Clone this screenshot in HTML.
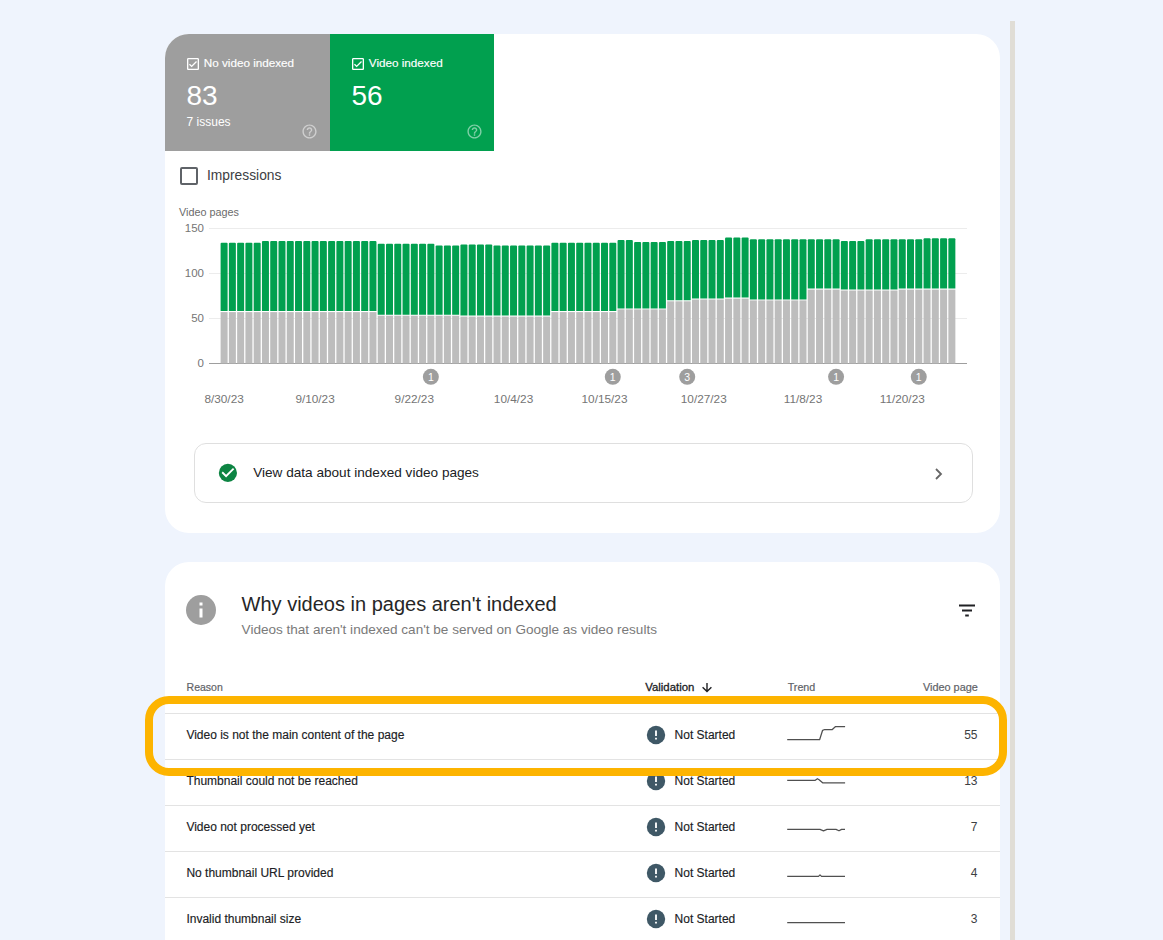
<!DOCTYPE html>
<html><head><meta charset="utf-8"><style>
*{box-sizing:border-box}
html,body{margin:0;padding:0}
body{width:1163px;height:940px;overflow:hidden;position:relative;background:#eff4fd;font-family:"Liberation Sans",sans-serif;color:#202124}
.abs{position:absolute}
.card{position:absolute;left:165px;width:835px;background:#fff;border-radius:24px;overflow:hidden}
.tab{position:absolute;top:0;height:117px;color:#fff}
.tabl{position:absolute;left:38.8px;top:22px;font-size:11.7px;line-height:14px;white-space:nowrap;-webkit-text-stroke:0.15px #fff}
.cb{position:absolute;left:19.5px;top:22px;width:16px;height:16px}
.big{position:absolute;left:21.5px;top:46px;font-size:28px;line-height:32px}
.iss{position:absolute;left:21.6px;top:81px;font-size:12px;line-height:14px}
.help{position:absolute;left:136.4px;top:89.4px;width:17px;height:17px}
.txt{position:absolute;white-space:nowrap;line-height:1}
.row{position:absolute;left:165px;width:835px;height:1px;background:#e3e3e3}
.rt{position:absolute;white-space:nowrap;font-size:12px;line-height:0;height:0;-webkit-text-stroke:0.15px #202124;color:#202124}
.num{right:185.5px;text-align:right;-webkit-text-stroke:0;color:#3c4043}
.exc{position:absolute;width:18px;height:18px;border-radius:50%;background:#3c4f5c;color:#fff;font-size:13px;font-weight:bold;text-align:center;line-height:18px}
.hd{position:absolute;white-space:nowrap;font-size:11px;line-height:0;color:#5f6368;-webkit-text-stroke:0.2px #5f6368}
</style></head><body>
<div class="abs" style="left:1010px;top:21px;width:5px;height:930px;background:#e0ddd6"></div>

<div class="card" style="top:34px;height:499px">
  <div class="tab" style="left:0;width:165px;background:#9e9e9e">
    <svg class="cb" viewBox="0 0 24 24"><path fill="#fff" d="M19 3H5c-1.11 0-2 .9-2 2v14c0 1.1.89 2 2 2h14c1.11 0 2-.9 2-2V5c0-1.1-.89-2-2-2zm0 16H5V5h14v14zM17.99 9l-1.41-1.42-6.59 6.59-2.58-2.57-1.42 1.41 4 3.99z"/></svg>
    <div class="tabl">No video indexed</div>
    <div class="big">83</div>
    <div class="iss">7 issues</div>
    <svg class="help" viewBox="0 0 24 24"><path fill="rgba(255,255,255,0.5)" d="M11 18h2v-2h-2v2zm1-16C6.48 2 2 6.48 2 12s4.48 10 10 10 10-4.48 10-10S17.52 2 12 2zm0 18c-4.41 0-8-3.59-8-8s3.590-8 8-8 8 3.59 8 8-3.59 8-8 8zm0-14c-2.21 0-4 1.79-4 4h2c0-1.1.9-2 2-2s2 .9 2 2c0 2-3 1.75-3 5h2c0-2.250 3-2.5 3-5 0-2.21-1.79-4-4-4z"/></svg>
  </div>
  <div class="tab" style="left:165px;width:164px;background:#01a04f">
    <svg class="cb" viewBox="0 0 24 24"><path fill="#fff" d="M19 3H5c-1.11 0-2 .9-2 2v14c0 1.1.89 2 2 2h14c1.11 0 2-.9 2-2V5c0-1.1-.89-2-2-2zm0 16H5V5h14v14zM17.99 9l-1.41-1.42-6.59 6.59-2.58-2.57-1.42 1.41 4 3.99z"/></svg>
    <div class="tabl">Video indexed</div>
    <div class="big">56</div>
    <svg class="help" viewBox="0 0 24 24"><path fill="rgba(255,255,255,0.5)" d="M11 18h2v-2h-2v2zm1-16C6.48 2 2 6.48 2 12s4.48 10 10 10 10-4.48 10-10S17.52 2 12 2zm0 18c-4.41 0-8-3.59-8-8s3.590-8 8-8 8 3.59 8 8-3.59 8-8 8zm0-14c-2.21 0-4 1.79-4 4h2c0-1.1.9-2 2-2s2 .9 2 2c0 2-3 1.75-3 5h2c0-2.250 3-2.5 3-5 0-2.21-1.79-4-4-4z"/></svg>
  </div>
  <div class="abs" style="left:15px;top:132.5px;width:18px;height:18px;border:2px solid #5f6368;border-radius:2px"></div>
  <div class="txt" style="left:42px;top:135px;font-size:13.8px;color:#3c4043">Impressions</div>
  <div class="abs" style="left:29px;top:409px;width:779px;height:60px;border:1px solid #dfdfdf;border-radius:12px"></div>
  <svg class="abs" style="left:51.6px;top:428px" width="21.8" height="21.8" viewBox="0 0 24 24"><circle cx="12" cy="12" r="10" fill="#0d8443"/><path fill="#fff" d="M10 17l-5-5 1.41-1.41L10 14.17l7.59-7.59L19 8l-9 9z"/></svg>
  <div class="txt" style="left:88.2px;top:431.8px;font-size:13.6px;color:#202124">View data about indexed video pages</div>
  <svg class="abs" style="left:768px;top:432.5px" width="10" height="14" viewBox="0 0 10 14"><path d="M3 2L8 7L3 12" fill="none" stroke="#666" stroke-width="1.8"/></svg>
</div>

<svg class="abs" style="left:0;top:0" width="1163" height="940" viewBox="0 0 1163 940" font-family="Liberation Sans, sans-serif">
  <g stroke="#ececec" stroke-width="1"><path d="M209 228.5H967M209 273.5H967M209 318.5H967"/></g>
  <path d="M209 363.5H967" stroke="#9e9e9e" stroke-width="1"/>
  <text x="179" y="216.3" fill="#6b6b6b" font-size="10.8">Video pages</text>
  <g fill="#757575" font-size="11.5" text-anchor="end"><text x="204" y="232">150</text><text x="204" y="277">100</text><text x="204" y="322">50</text><text x="204" y="367">0</text></g>
  <path d="M220.60 363.4V312.10h7.0V363.4z" fill="#bdbdbd"/>
<path d="M220.60 311.10V243.80q0 -1 1 -1h5.0q1 0 1 1V311.10z" fill="#01a04f"/>
<path d="M228.87 363.4V312.10h7.0V363.4z" fill="#bdbdbd"/>
<path d="M228.87 311.10V243.80q0 -1 1 -1h5.0q1 0 1 1V311.10z" fill="#01a04f"/>
<path d="M237.14 363.4V312.10h7.0V363.4z" fill="#bdbdbd"/>
<path d="M237.14 311.10V243.80q0 -1 1 -1h5.0q1 0 1 1V311.10z" fill="#01a04f"/>
<path d="M245.41 363.4V312.10h7.0V363.4z" fill="#bdbdbd"/>
<path d="M245.41 311.10V243.80q0 -1 1 -1h5.0q1 0 1 1V311.10z" fill="#01a04f"/>
<path d="M253.68 363.4V312.10h7.0V363.4z" fill="#bdbdbd"/>
<path d="M253.68 311.10V243.80q0 -1 1 -1h5.0q1 0 1 1V311.10z" fill="#01a04f"/>
<path d="M261.95 363.4V312.10h7.0V363.4z" fill="#bdbdbd"/>
<path d="M261.95 311.10V242.00q0 -1 1 -1h5.0q1 0 1 1V311.10z" fill="#01a04f"/>
<path d="M270.22 363.4V312.10h7.0V363.4z" fill="#bdbdbd"/>
<path d="M270.22 311.10V242.00q0 -1 1 -1h5.0q1 0 1 1V311.10z" fill="#01a04f"/>
<path d="M278.49 363.4V312.10h7.0V363.4z" fill="#bdbdbd"/>
<path d="M278.49 311.10V242.00q0 -1 1 -1h5.0q1 0 1 1V311.10z" fill="#01a04f"/>
<path d="M286.76 363.4V312.10h7.0V363.4z" fill="#bdbdbd"/>
<path d="M286.76 311.10V242.00q0 -1 1 -1h5.0q1 0 1 1V311.10z" fill="#01a04f"/>
<path d="M295.03 363.4V312.10h7.0V363.4z" fill="#bdbdbd"/>
<path d="M295.03 311.10V242.00q0 -1 1 -1h5.0q1 0 1 1V311.10z" fill="#01a04f"/>
<path d="M303.30 363.4V312.10h7.0V363.4z" fill="#bdbdbd"/>
<path d="M303.30 311.10V242.00q0 -1 1 -1h5.0q1 0 1 1V311.10z" fill="#01a04f"/>
<path d="M311.57 363.4V312.10h7.0V363.4z" fill="#bdbdbd"/>
<path d="M311.57 311.10V242.00q0 -1 1 -1h5.0q1 0 1 1V311.10z" fill="#01a04f"/>
<path d="M319.84 363.4V312.10h7.0V363.4z" fill="#bdbdbd"/>
<path d="M319.84 311.10V242.00q0 -1 1 -1h5.0q1 0 1 1V311.10z" fill="#01a04f"/>
<path d="M328.11 363.4V312.10h7.0V363.4z" fill="#bdbdbd"/>
<path d="M328.11 311.10V242.00q0 -1 1 -1h5.0q1 0 1 1V311.10z" fill="#01a04f"/>
<path d="M336.38 363.4V312.10h7.0V363.4z" fill="#bdbdbd"/>
<path d="M336.38 311.10V242.00q0 -1 1 -1h5.0q1 0 1 1V311.10z" fill="#01a04f"/>
<path d="M344.65 363.4V312.10h7.0V363.4z" fill="#bdbdbd"/>
<path d="M344.65 311.10V242.00q0 -1 1 -1h5.0q1 0 1 1V311.10z" fill="#01a04f"/>
<path d="M352.92 363.4V312.10h7.0V363.4z" fill="#bdbdbd"/>
<path d="M352.92 311.10V242.00q0 -1 1 -1h5.0q1 0 1 1V311.10z" fill="#01a04f"/>
<path d="M361.19 363.4V312.10h7.0V363.4z" fill="#bdbdbd"/>
<path d="M361.19 311.10V242.00q0 -1 1 -1h5.0q1 0 1 1V311.10z" fill="#01a04f"/>
<path d="M369.46 363.4V312.10h7.0V363.4z" fill="#bdbdbd"/>
<path d="M369.46 311.10V242.00q0 -1 1 -1h5.0q1 0 1 1V311.10z" fill="#01a04f"/>
<path d="M377.73 363.4V315.70h7.0V363.4z" fill="#bdbdbd"/>
<path d="M377.73 314.70V244.70q0 -1 1 -1h5.0q1 0 1 1V314.70z" fill="#01a04f"/>
<path d="M386.00 363.4V315.70h7.0V363.4z" fill="#bdbdbd"/>
<path d="M386.00 314.70V244.70q0 -1 1 -1h5.0q1 0 1 1V314.70z" fill="#01a04f"/>
<path d="M394.27 363.4V315.70h7.0V363.4z" fill="#bdbdbd"/>
<path d="M394.27 314.70V244.70q0 -1 1 -1h5.0q1 0 1 1V314.70z" fill="#01a04f"/>
<path d="M402.54 363.4V315.70h7.0V363.4z" fill="#bdbdbd"/>
<path d="M402.54 314.70V244.70q0 -1 1 -1h5.0q1 0 1 1V314.70z" fill="#01a04f"/>
<path d="M410.81 363.4V315.70h7.0V363.4z" fill="#bdbdbd"/>
<path d="M410.81 314.70V244.70q0 -1 1 -1h5.0q1 0 1 1V314.70z" fill="#01a04f"/>
<path d="M419.08 363.4V315.70h7.0V363.4z" fill="#bdbdbd"/>
<path d="M419.08 314.70V244.70q0 -1 1 -1h5.0q1 0 1 1V314.70z" fill="#01a04f"/>
<path d="M427.35 363.4V315.70h7.0V363.4z" fill="#bdbdbd"/>
<path d="M427.35 314.70V244.70q0 -1 1 -1h5.0q1 0 1 1V314.70z" fill="#01a04f"/>
<path d="M435.62 363.4V315.70h7.0V363.4z" fill="#bdbdbd"/>
<path d="M435.62 314.70V246.50q0 -1 1 -1h5.0q1 0 1 1V314.70z" fill="#01a04f"/>
<path d="M443.89 363.4V315.70h7.0V363.4z" fill="#bdbdbd"/>
<path d="M443.89 314.70V246.50q0 -1 1 -1h5.0q1 0 1 1V314.70z" fill="#01a04f"/>
<path d="M452.16 363.4V315.70h7.0V363.4z" fill="#bdbdbd"/>
<path d="M452.16 314.70V246.50q0 -1 1 -1h5.0q1 0 1 1V314.70z" fill="#01a04f"/>
<path d="M460.43 363.4V316.60h7.0V363.4z" fill="#bdbdbd"/>
<path d="M460.43 315.60V245.60q0 -1 1 -1h5.0q1 0 1 1V315.60z" fill="#01a04f"/>
<path d="M468.70 363.4V316.60h7.0V363.4z" fill="#bdbdbd"/>
<path d="M468.70 315.60V245.60q0 -1 1 -1h5.0q1 0 1 1V315.60z" fill="#01a04f"/>
<path d="M476.97 363.4V316.60h7.0V363.4z" fill="#bdbdbd"/>
<path d="M476.97 315.60V245.60q0 -1 1 -1h5.0q1 0 1 1V315.60z" fill="#01a04f"/>
<path d="M485.24 363.4V316.60h7.0V363.4z" fill="#bdbdbd"/>
<path d="M485.24 315.60V245.60q0 -1 1 -1h5.0q1 0 1 1V315.60z" fill="#01a04f"/>
<path d="M493.51 363.4V316.60h7.0V363.4z" fill="#bdbdbd"/>
<path d="M493.51 315.60V246.50q0 -1 1 -1h5.0q1 0 1 1V315.60z" fill="#01a04f"/>
<path d="M501.78 363.4V316.60h7.0V363.4z" fill="#bdbdbd"/>
<path d="M501.78 315.60V246.50q0 -1 1 -1h5.0q1 0 1 1V315.60z" fill="#01a04f"/>
<path d="M510.05 363.4V316.60h7.0V363.4z" fill="#bdbdbd"/>
<path d="M510.05 315.60V246.50q0 -1 1 -1h5.0q1 0 1 1V315.60z" fill="#01a04f"/>
<path d="M518.32 363.4V316.60h7.0V363.4z" fill="#bdbdbd"/>
<path d="M518.32 315.60V246.50q0 -1 1 -1h5.0q1 0 1 1V315.60z" fill="#01a04f"/>
<path d="M526.59 363.4V316.60h7.0V363.4z" fill="#bdbdbd"/>
<path d="M526.59 315.60V246.50q0 -1 1 -1h5.0q1 0 1 1V315.60z" fill="#01a04f"/>
<path d="M534.86 363.4V316.60h7.0V363.4z" fill="#bdbdbd"/>
<path d="M534.86 315.60V246.50q0 -1 1 -1h5.0q1 0 1 1V315.60z" fill="#01a04f"/>
<path d="M543.13 363.4V316.60h7.0V363.4z" fill="#bdbdbd"/>
<path d="M543.13 315.60V246.50q0 -1 1 -1h5.0q1 0 1 1V315.60z" fill="#01a04f"/>
<path d="M551.40 363.4V312.10h7.0V363.4z" fill="#bdbdbd"/>
<path d="M551.40 311.10V243.80q0 -1 1 -1h5.0q1 0 1 1V311.10z" fill="#01a04f"/>
<path d="M559.67 363.4V312.10h7.0V363.4z" fill="#bdbdbd"/>
<path d="M559.67 311.10V243.80q0 -1 1 -1h5.0q1 0 1 1V311.10z" fill="#01a04f"/>
<path d="M567.94 363.4V312.10h7.0V363.4z" fill="#bdbdbd"/>
<path d="M567.94 311.10V243.80q0 -1 1 -1h5.0q1 0 1 1V311.10z" fill="#01a04f"/>
<path d="M576.21 363.4V312.10h7.0V363.4z" fill="#bdbdbd"/>
<path d="M576.21 311.10V243.80q0 -1 1 -1h5.0q1 0 1 1V311.10z" fill="#01a04f"/>
<path d="M584.48 363.4V312.10h7.0V363.4z" fill="#bdbdbd"/>
<path d="M584.48 311.10V243.80q0 -1 1 -1h5.0q1 0 1 1V311.10z" fill="#01a04f"/>
<path d="M592.75 363.4V312.10h7.0V363.4z" fill="#bdbdbd"/>
<path d="M592.75 311.10V243.80q0 -1 1 -1h5.0q1 0 1 1V311.10z" fill="#01a04f"/>
<path d="M601.02 363.4V312.10h7.0V363.4z" fill="#bdbdbd"/>
<path d="M601.02 311.10V243.80q0 -1 1 -1h5.0q1 0 1 1V311.10z" fill="#01a04f"/>
<path d="M609.29 363.4V312.10h7.0V363.4z" fill="#bdbdbd"/>
<path d="M609.29 311.10V243.80q0 -1 1 -1h5.0q1 0 1 1V311.10z" fill="#01a04f"/>
<path d="M617.56 363.4V309.40h7.0V363.4z" fill="#bdbdbd"/>
<path d="M617.56 308.40V241.10q0 -1 1 -1h5.0q1 0 1 1V308.40z" fill="#01a04f"/>
<path d="M625.83 363.4V309.40h7.0V363.4z" fill="#bdbdbd"/>
<path d="M625.83 308.40V241.10q0 -1 1 -1h5.0q1 0 1 1V308.40z" fill="#01a04f"/>
<path d="M634.10 363.4V309.40h7.0V363.4z" fill="#bdbdbd"/>
<path d="M634.10 308.40V242.90q0 -1 1 -1h5.0q1 0 1 1V308.40z" fill="#01a04f"/>
<path d="M642.37 363.4V309.40h7.0V363.4z" fill="#bdbdbd"/>
<path d="M642.37 308.40V242.90q0 -1 1 -1h5.0q1 0 1 1V308.40z" fill="#01a04f"/>
<path d="M650.64 363.4V309.40h7.0V363.4z" fill="#bdbdbd"/>
<path d="M650.64 308.40V242.90q0 -1 1 -1h5.0q1 0 1 1V308.40z" fill="#01a04f"/>
<path d="M658.91 363.4V309.40h7.0V363.4z" fill="#bdbdbd"/>
<path d="M658.91 308.40V242.90q0 -1 1 -1h5.0q1 0 1 1V308.40z" fill="#01a04f"/>
<path d="M667.18 363.4V301.30h7.0V363.4z" fill="#bdbdbd"/>
<path d="M667.18 300.30V242.00q0 -1 1 -1h5.0q1 0 1 1V300.30z" fill="#01a04f"/>
<path d="M675.45 363.4V301.30h7.0V363.4z" fill="#bdbdbd"/>
<path d="M675.45 300.30V242.00q0 -1 1 -1h5.0q1 0 1 1V300.30z" fill="#01a04f"/>
<path d="M683.72 363.4V301.30h7.0V363.4z" fill="#bdbdbd"/>
<path d="M683.72 300.30V242.00q0 -1 1 -1h5.0q1 0 1 1V300.30z" fill="#01a04f"/>
<path d="M691.99 363.4V299.50h7.0V363.4z" fill="#bdbdbd"/>
<path d="M691.99 298.50V241.10q0 -1 1 -1h5.0q1 0 1 1V298.50z" fill="#01a04f"/>
<path d="M700.26 363.4V299.50h7.0V363.4z" fill="#bdbdbd"/>
<path d="M700.26 298.50V241.10q0 -1 1 -1h5.0q1 0 1 1V298.50z" fill="#01a04f"/>
<path d="M708.53 363.4V299.50h7.0V363.4z" fill="#bdbdbd"/>
<path d="M708.53 298.50V241.10q0 -1 1 -1h5.0q1 0 1 1V298.50z" fill="#01a04f"/>
<path d="M716.80 363.4V299.50h7.0V363.4z" fill="#bdbdbd"/>
<path d="M716.80 298.50V241.10q0 -1 1 -1h5.0q1 0 1 1V298.50z" fill="#01a04f"/>
<path d="M725.07 363.4V298.60h7.0V363.4z" fill="#bdbdbd"/>
<path d="M725.07 297.60V238.40q0 -1 1 -1h5.0q1 0 1 1V297.60z" fill="#01a04f"/>
<path d="M733.34 363.4V298.60h7.0V363.4z" fill="#bdbdbd"/>
<path d="M733.34 297.60V238.40q0 -1 1 -1h5.0q1 0 1 1V297.60z" fill="#01a04f"/>
<path d="M741.61 363.4V298.60h7.0V363.4z" fill="#bdbdbd"/>
<path d="M741.61 297.60V238.40q0 -1 1 -1h5.0q1 0 1 1V297.60z" fill="#01a04f"/>
<path d="M749.88 363.4V300.40h7.0V363.4z" fill="#bdbdbd"/>
<path d="M749.88 299.40V240.20q0 -1 1 -1h5.0q1 0 1 1V299.40z" fill="#01a04f"/>
<path d="M758.15 363.4V300.40h7.0V363.4z" fill="#bdbdbd"/>
<path d="M758.15 299.40V240.20q0 -1 1 -1h5.0q1 0 1 1V299.40z" fill="#01a04f"/>
<path d="M766.42 363.4V300.40h7.0V363.4z" fill="#bdbdbd"/>
<path d="M766.42 299.40V240.20q0 -1 1 -1h5.0q1 0 1 1V299.40z" fill="#01a04f"/>
<path d="M774.69 363.4V300.40h7.0V363.4z" fill="#bdbdbd"/>
<path d="M774.69 299.40V240.20q0 -1 1 -1h5.0q1 0 1 1V299.40z" fill="#01a04f"/>
<path d="M782.96 363.4V300.40h7.0V363.4z" fill="#bdbdbd"/>
<path d="M782.96 299.40V240.20q0 -1 1 -1h5.0q1 0 1 1V299.40z" fill="#01a04f"/>
<path d="M791.23 363.4V300.40h7.0V363.4z" fill="#bdbdbd"/>
<path d="M791.23 299.40V240.20q0 -1 1 -1h5.0q1 0 1 1V299.40z" fill="#01a04f"/>
<path d="M799.50 363.4V300.40h7.0V363.4z" fill="#bdbdbd"/>
<path d="M799.50 299.40V240.20q0 -1 1 -1h5.0q1 0 1 1V299.40z" fill="#01a04f"/>
<path d="M807.77 363.4V289.60h7.0V363.4z" fill="#bdbdbd"/>
<path d="M807.77 288.60V240.20q0 -1 1 -1h5.0q1 0 1 1V288.60z" fill="#01a04f"/>
<path d="M816.04 363.4V289.60h7.0V363.4z" fill="#bdbdbd"/>
<path d="M816.04 288.60V240.20q0 -1 1 -1h5.0q1 0 1 1V288.60z" fill="#01a04f"/>
<path d="M824.31 363.4V289.60h7.0V363.4z" fill="#bdbdbd"/>
<path d="M824.31 288.60V240.20q0 -1 1 -1h5.0q1 0 1 1V288.60z" fill="#01a04f"/>
<path d="M832.58 363.4V289.60h7.0V363.4z" fill="#bdbdbd"/>
<path d="M832.58 288.60V240.20q0 -1 1 -1h5.0q1 0 1 1V288.60z" fill="#01a04f"/>
<path d="M840.85 363.4V290.50h7.0V363.4z" fill="#bdbdbd"/>
<path d="M840.85 289.50V242.00q0 -1 1 -1h5.0q1 0 1 1V289.50z" fill="#01a04f"/>
<path d="M849.12 363.4V290.50h7.0V363.4z" fill="#bdbdbd"/>
<path d="M849.12 289.50V242.00q0 -1 1 -1h5.0q1 0 1 1V289.50z" fill="#01a04f"/>
<path d="M857.39 363.4V290.50h7.0V363.4z" fill="#bdbdbd"/>
<path d="M857.39 289.50V242.00q0 -1 1 -1h5.0q1 0 1 1V289.50z" fill="#01a04f"/>
<path d="M865.66 363.4V290.50h7.0V363.4z" fill="#bdbdbd"/>
<path d="M865.66 289.50V240.20q0 -1 1 -1h5.0q1 0 1 1V289.50z" fill="#01a04f"/>
<path d="M873.93 363.4V290.50h7.0V363.4z" fill="#bdbdbd"/>
<path d="M873.93 289.50V240.20q0 -1 1 -1h5.0q1 0 1 1V289.50z" fill="#01a04f"/>
<path d="M882.20 363.4V290.50h7.0V363.4z" fill="#bdbdbd"/>
<path d="M882.20 289.50V240.20q0 -1 1 -1h5.0q1 0 1 1V289.50z" fill="#01a04f"/>
<path d="M890.47 363.4V290.50h7.0V363.4z" fill="#bdbdbd"/>
<path d="M890.47 289.50V240.20q0 -1 1 -1h5.0q1 0 1 1V289.50z" fill="#01a04f"/>
<path d="M898.74 363.4V289.60h7.0V363.4z" fill="#bdbdbd"/>
<path d="M898.74 288.60V240.20q0 -1 1 -1h5.0q1 0 1 1V288.60z" fill="#01a04f"/>
<path d="M907.01 363.4V289.60h7.0V363.4z" fill="#bdbdbd"/>
<path d="M907.01 288.60V240.20q0 -1 1 -1h5.0q1 0 1 1V288.60z" fill="#01a04f"/>
<path d="M915.28 363.4V289.60h7.0V363.4z" fill="#bdbdbd"/>
<path d="M915.28 288.60V240.20q0 -1 1 -1h5.0q1 0 1 1V288.60z" fill="#01a04f"/>
<path d="M923.55 363.4V289.60h7.0V363.4z" fill="#bdbdbd"/>
<path d="M923.55 288.60V239.30q0 -1 1 -1h5.0q1 0 1 1V288.60z" fill="#01a04f"/>
<path d="M931.82 363.4V289.60h7.0V363.4z" fill="#bdbdbd"/>
<path d="M931.82 288.60V239.30q0 -1 1 -1h5.0q1 0 1 1V288.60z" fill="#01a04f"/>
<path d="M940.09 363.4V289.60h7.0V363.4z" fill="#bdbdbd"/>
<path d="M940.09 288.60V239.30q0 -1 1 -1h5.0q1 0 1 1V288.60z" fill="#01a04f"/>
<path d="M948.36 363.4V289.60h7.0V363.4z" fill="#bdbdbd"/>
<path d="M948.36 288.60V239.30q0 -1 1 -1h5.0q1 0 1 1V288.60z" fill="#01a04f"/>
  <circle cx="430.85" cy="376.8" r="8" fill="#9e9e9e"/><text x="430.85" y="380.6" fill="#fff" font-size="10.5" text-anchor="middle">1</text><circle cx="612.79" cy="376.8" r="8" fill="#9e9e9e"/><text x="612.79" y="380.6" fill="#fff" font-size="10.5" text-anchor="middle">1</text><circle cx="687.22" cy="376.8" r="8" fill="#9e9e9e"/><text x="687.22" y="380.6" fill="#fff" font-size="10.5" text-anchor="middle">3</text><circle cx="836.08" cy="376.8" r="8" fill="#9e9e9e"/><text x="836.08" y="380.6" fill="#fff" font-size="10.5" text-anchor="middle">1</text><circle cx="918.78" cy="376.8" r="8" fill="#9e9e9e"/><text x="918.78" y="380.6" fill="#fff" font-size="10.5" text-anchor="middle">1</text>
  <text x="224.10" y="402.8" fill="#757575" font-size="11.8" text-anchor="middle">8/30/23</text><text x="315.07" y="402.8" fill="#757575" font-size="11.8" text-anchor="middle">9/10/23</text><text x="414.31" y="402.8" fill="#757575" font-size="11.8" text-anchor="middle">9/22/23</text><text x="513.55" y="402.8" fill="#757575" font-size="11.8" text-anchor="middle">10/4/23</text><text x="604.52" y="402.8" fill="#757575" font-size="11.8" text-anchor="middle">10/15/23</text><text x="703.76" y="402.8" fill="#757575" font-size="11.8" text-anchor="middle">10/27/23</text><text x="803.00" y="402.8" fill="#757575" font-size="11.8" text-anchor="middle">11/8/23</text><text x="902.24" y="402.8" fill="#757575" font-size="11.8" text-anchor="middle">11/20/23</text>
</svg>

<div class="card" style="top:562px;height:420px"></div>
<svg class="abs" style="left:183px;top:591.5px" width="36" height="36" viewBox="0 0 24 24"><circle cx="12" cy="12" r="10" fill="#9e9e9e"/><path fill="#fff" d="M13 17h-2v-6h2v6zm0-8h-2V7h2v2z"/></svg>
<div class="txt" style="left:241.6px;top:593.5px;font-size:20px;color:#262626">Why videos in pages aren't indexed</div>
<div class="txt" style="left:241.6px;top:623px;font-size:13.55px;color:#7a7a7a">Videos that aren't indexed can't be served on Google as video results</div>
<svg class="abs" style="left:958px;top:604px" width="18" height="14" viewBox="0 0 18 14"><path d="M1 1.5H17M4 6.5H14M7.2 11.5H10.8" stroke="#202124" stroke-width="2"/></svg>
<div class="hd" style="left:186.6px;top:687px;font-size:10.5px">Reason</div>
<div class="hd" style="left:645.2px;top:687px;font-size:11.4px;color:#202124;-webkit-text-stroke:0.3px #202124">Validation</div>
<svg class="abs" style="left:701px;top:681px" width="12" height="12" viewBox="0 0 12 12"><path d="M6 2V10.6M1.6 6.2L6 10.6L10.4 6.2" fill="none" stroke="#202124" stroke-width="1.4"/></svg>
<div class="hd" style="left:787.7px;top:687px;font-size:10.7px">Trend</div>
<div class="hd" style="right:185.2px;top:687px;font-size:10.9px">Video page</div>
<div class="row" style="top:713.2px"></div>
<div class="rt" style="left:186.4px;top:735.2px">Video is not the main content of the page</div>
<svg class="abs" style="left:645px;top:724.3000000000001px" width="22" height="22" viewBox="0 0 24 24"><circle cx="12" cy="12" r="10" fill="#3f5866"/><path fill="#fff" d="M13 17h-2v-2h2v2zm0-4h-2V7h2v6z"/></svg>
<div class="rt" style="left:674.6px;top:735.2px">Not Started</div>
<div class="rt num" style="top:735.2px">55</div><div class="row" style="top:759.1px"></div>
<div class="rt" style="left:186.4px;top:781.1px">Thumbnail could not be reached</div>
<svg class="abs" style="left:645px;top:770.2px" width="22" height="22" viewBox="0 0 24 24"><circle cx="12" cy="12" r="10" fill="#3f5866"/><path fill="#fff" d="M13 17h-2v-2h2v2zm0-4h-2V7h2v6z"/></svg>
<div class="rt" style="left:674.6px;top:781.1px">Not Started</div>
<div class="rt num" style="top:781.1px">13</div><div class="row" style="top:805.0px"></div>
<div class="rt" style="left:186.4px;top:827.0px">Video not processed yet</div>
<svg class="abs" style="left:645px;top:816.1px" width="22" height="22" viewBox="0 0 24 24"><circle cx="12" cy="12" r="10" fill="#3f5866"/><path fill="#fff" d="M13 17h-2v-2h2v2zm0-4h-2V7h2v6z"/></svg>
<div class="rt" style="left:674.6px;top:827.0px">Not Started</div>
<div class="rt num" style="top:827.0px">7</div><div class="row" style="top:850.9px"></div>
<div class="rt" style="left:186.4px;top:872.9px">No thumbnail URL provided</div>
<svg class="abs" style="left:645px;top:862.0px" width="22" height="22" viewBox="0 0 24 24"><circle cx="12" cy="12" r="10" fill="#3f5866"/><path fill="#fff" d="M13 17h-2v-2h2v2zm0-4h-2V7h2v6z"/></svg>
<div class="rt" style="left:674.6px;top:872.9px">Not Started</div>
<div class="rt num" style="top:872.9px">4</div><div class="row" style="top:896.8px"></div>
<div class="rt" style="left:186.4px;top:918.8px">Invalid thumbnail size</div>
<svg class="abs" style="left:645px;top:907.9px" width="22" height="22" viewBox="0 0 24 24"><circle cx="12" cy="12" r="10" fill="#3f5866"/><path fill="#fff" d="M13 17h-2v-2h2v2zm0-4h-2V7h2v6z"/></svg>
<div class="rt" style="left:674.6px;top:918.8px">Not Started</div>
<div class="rt num" style="top:918.8px">3</div>
<svg class="abs" style="left:0;top:0" width="1163" height="940" viewBox="0 0 1163 940"><path d="M787.2 739.7H819.6L822.6 730.3L824.7 729.5H832.3L835.3 726.7H845.1" fill="none" stroke="#505050" stroke-width="1.25" stroke-linejoin="round"/><path d="M787.2 780.3H815.3L817.4 778.7L819.1 779.7L822.6 782.8H845.1" fill="none" stroke="#505050" stroke-width="1.25" stroke-linejoin="round"/><path d="M787.2 829.4H820L823.5 830.8L827 829.4H836L839 830.8L841.6 829.4H845" fill="none" stroke="#505050" stroke-width="1.25" stroke-linejoin="round"/><path d="M787.2 876.4H818.5L820 874.9L821.5 876.4H845" fill="none" stroke="#505050" stroke-width="1.25" stroke-linejoin="round"/><path d="M787.2 922.5H845" fill="none" stroke="#505050" stroke-width="1.25" stroke-linejoin="round"/>
<rect x="149" y="700" width="854" height="72" rx="20" ry="20" fill="none" stroke="#fdb400" stroke-width="8"/>
</svg>
</body></html>
